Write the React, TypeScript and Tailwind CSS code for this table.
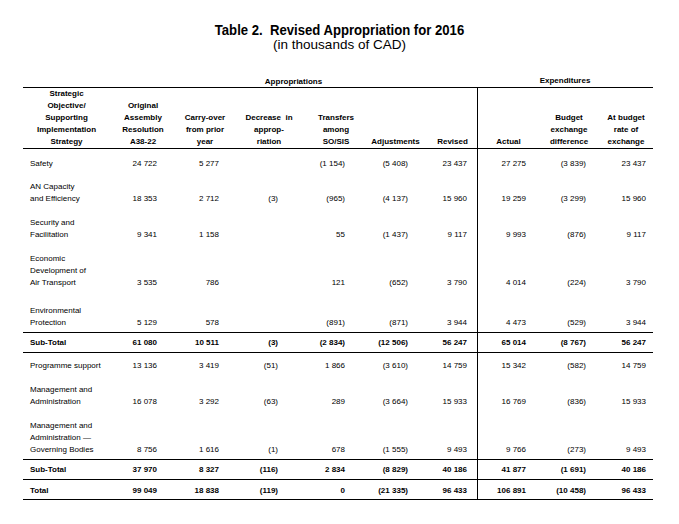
import React from 'react';
import clsx from 'clsx';

const cols = 'grid grid-cols-[87px_66px_58px_70px_64px_55px_54px_62px_60px_54px]';
const padRight = ['', 'pr-[19px]', 'pr-[15px]', 'pr-[26px]', 'pr-[23px]', 'pr-[15px]', 'pr-[10px]', 'pr-[13px]', 'pr-[13px]', 'pr-[7px]'];

const headers: string[][] = [
    ['Strategic', 'Objective/', 'Supporting', 'Implementation', 'Strategy'],
    ['Original', 'Assembly', 'Resolution', 'A38-22'],
    ['Carry-over', 'from prior', 'year'],
    ['Decrease  in', 'approp-', 'riation'],
    ['Transfers', 'among', 'SO/SIS'],
    ['Adjustments'],
    ['Revised'],
    ['Actual'],
    ['Budget', 'exchange', 'difference'],
    ['At budget', 'rate of', 'exchange'],
];

interface RowData {
    label: string[];
    values: string[];
    height: string;
    bold?: boolean;
    rule?: boolean;
    pb?: string;
}

const rows: RowData[] = [
    { label: ['Safety'], values: ['24 722', '5 277', '', '(1 154)', '(5 408)', '23 437', '27 275', '(3 839)', '23 437'], height: 'h-[21px]' },
    { label: ['AN Capacity', 'and Efficiency'], values: ['18 353', '2 712', '(3)', '(965)', '(4 137)', '15 960', '19 259', '(3 299)', '15 960'], height: 'h-[35px]' },
    { label: ['Security and', 'Facilitation'], values: ['9 341', '1 158', '', '55', '(1 437)', '9 117', '9 993', '(876)', '9 117'], height: 'h-[36px]' },
    { label: ['Economic', 'Development of', 'Air Transport'], values: ['3 535', '786', '', '121', '(652)', '3 790', '4 014', '(224)', '3 790'], height: 'h-[48px]' },
    { label: ['Environmental', 'Protection'], values: ['5 129', '578', '', '(891)', '(871)', '3 944', '4 473', '(529)', '3 944'], height: 'h-[44px]', rule: true, pb: 'pb-[3px]' },
    { label: ['Sub-Total'], values: ['61 080', '10 511', '(3)', '(2 834)', '(12 506)', '56 247', '65 014', '(8 767)', '56 247'], height: 'h-[20px]', bold: true, rule: true, pb: 'pb-[3px]' },
    { label: ['Programme support'], values: ['13 136', '3 419', '(51)', '1 866', '(3 610)', '14 759', '15 342', '(582)', '14 759'], height: 'h-[19px]' },
    { label: ['Management and', 'Administration'], values: ['16 078', '3 292', '(63)', '289', '(3 664)', '15 933', '16 769', '(836)', '15 933'], height: 'h-[36px]' },
    { label: ['Management and', 'Administration \u2014', 'Governing Bodies'], values: ['8 756', '1 616', '(1)', '678', '(1 555)', '9 493', '9 766', '(273)', '9 493'], height: 'h-[52px]', rule: true, pb: 'pb-[3px]' },
    { label: ['Sub-Total'], values: ['37 970', '8 327', '(116)', '2 834', '(8 829)', '40 186', '41 877', '(1 691)', '40 186'], height: 'h-[20px]', bold: true, rule: true, pb: 'pb-[3px]' },
    { label: ['Total'], values: ['99 049', '18 838', '(119)', '0', '(21 335)', '96 433', '106 891', '(10 458)', '96 433'], height: 'h-[20px]', bold: true, rule: true, pb: 'pb-[2px]' },
];

function Row({ label, values, height, bold, rule, pb }: RowData) {
    return (
        <div className={clsx(cols, height, rule && 'border-b border-black', bold && 'font-bold')}>
            <div className={clsx('flex flex-col justify-end pl-[7px]', pb)}>
                {label.map((l) => (
                    <span key={l} className="whitespace-pre">{l}</span>
                ))}
            </div>
            {values.map((v, i) => (
                <div
                    key={i}
                    className={clsx('flex items-end justify-end', padRight[i + 1], pb, i === 6 && 'border-l border-black')}
                >
                    {v}
                </div>
            ))}
        </div>
    );
}

export default function App() {
    return (
        <div className="w-[679px] h-[524px] bg-white text-black font-['Liberation_Sans',Arial,sans-serif] text-[8px] leading-[12px]">
            <div className="pt-[22px] text-center">
                <h1 className="font-bold text-[15px] leading-[15px] scale-x-[0.875]">Table 2.&nbsp; Revised Appropriation for 2016</h1>
                <p className="text-[13.5px] leading-[15px]">(in thousands of CAD)</p>
            </div>

            <div className="ml-[23px] w-[630px] mt-[23px]">
                <div className={clsx(cols, 'h-[13px] border-b border-black font-bold')}>
                    <div />
                    <div className="col-span-6 pt-[2px] text-center leading-[10px]">Appropriations</div>
                    <div className="col-span-3 pt-[1px] text-center leading-[10px]">Expenditures</div>
                </div>

                <div className={clsx(cols, 'h-[61px] border-b border-black font-bold')}>
                    {headers.map((lines, i) => (
                        <div
                            key={i}
                            className={clsx(
                                'flex flex-col justify-end items-center text-center',
                                i === 6 && 'pl-[5px]',
                                i === 7 && 'border-l border-black'
                            )}
                        >
                            {lines.map((l) => (
                                <span key={l} className="whitespace-pre">{l}</span>
                            ))}
                        </div>
                    ))}
                </div>

                {rows.map((r, i) => (
                    <Row key={i} {...r} />
                ))}
            </div>
        </div>
    );
}
